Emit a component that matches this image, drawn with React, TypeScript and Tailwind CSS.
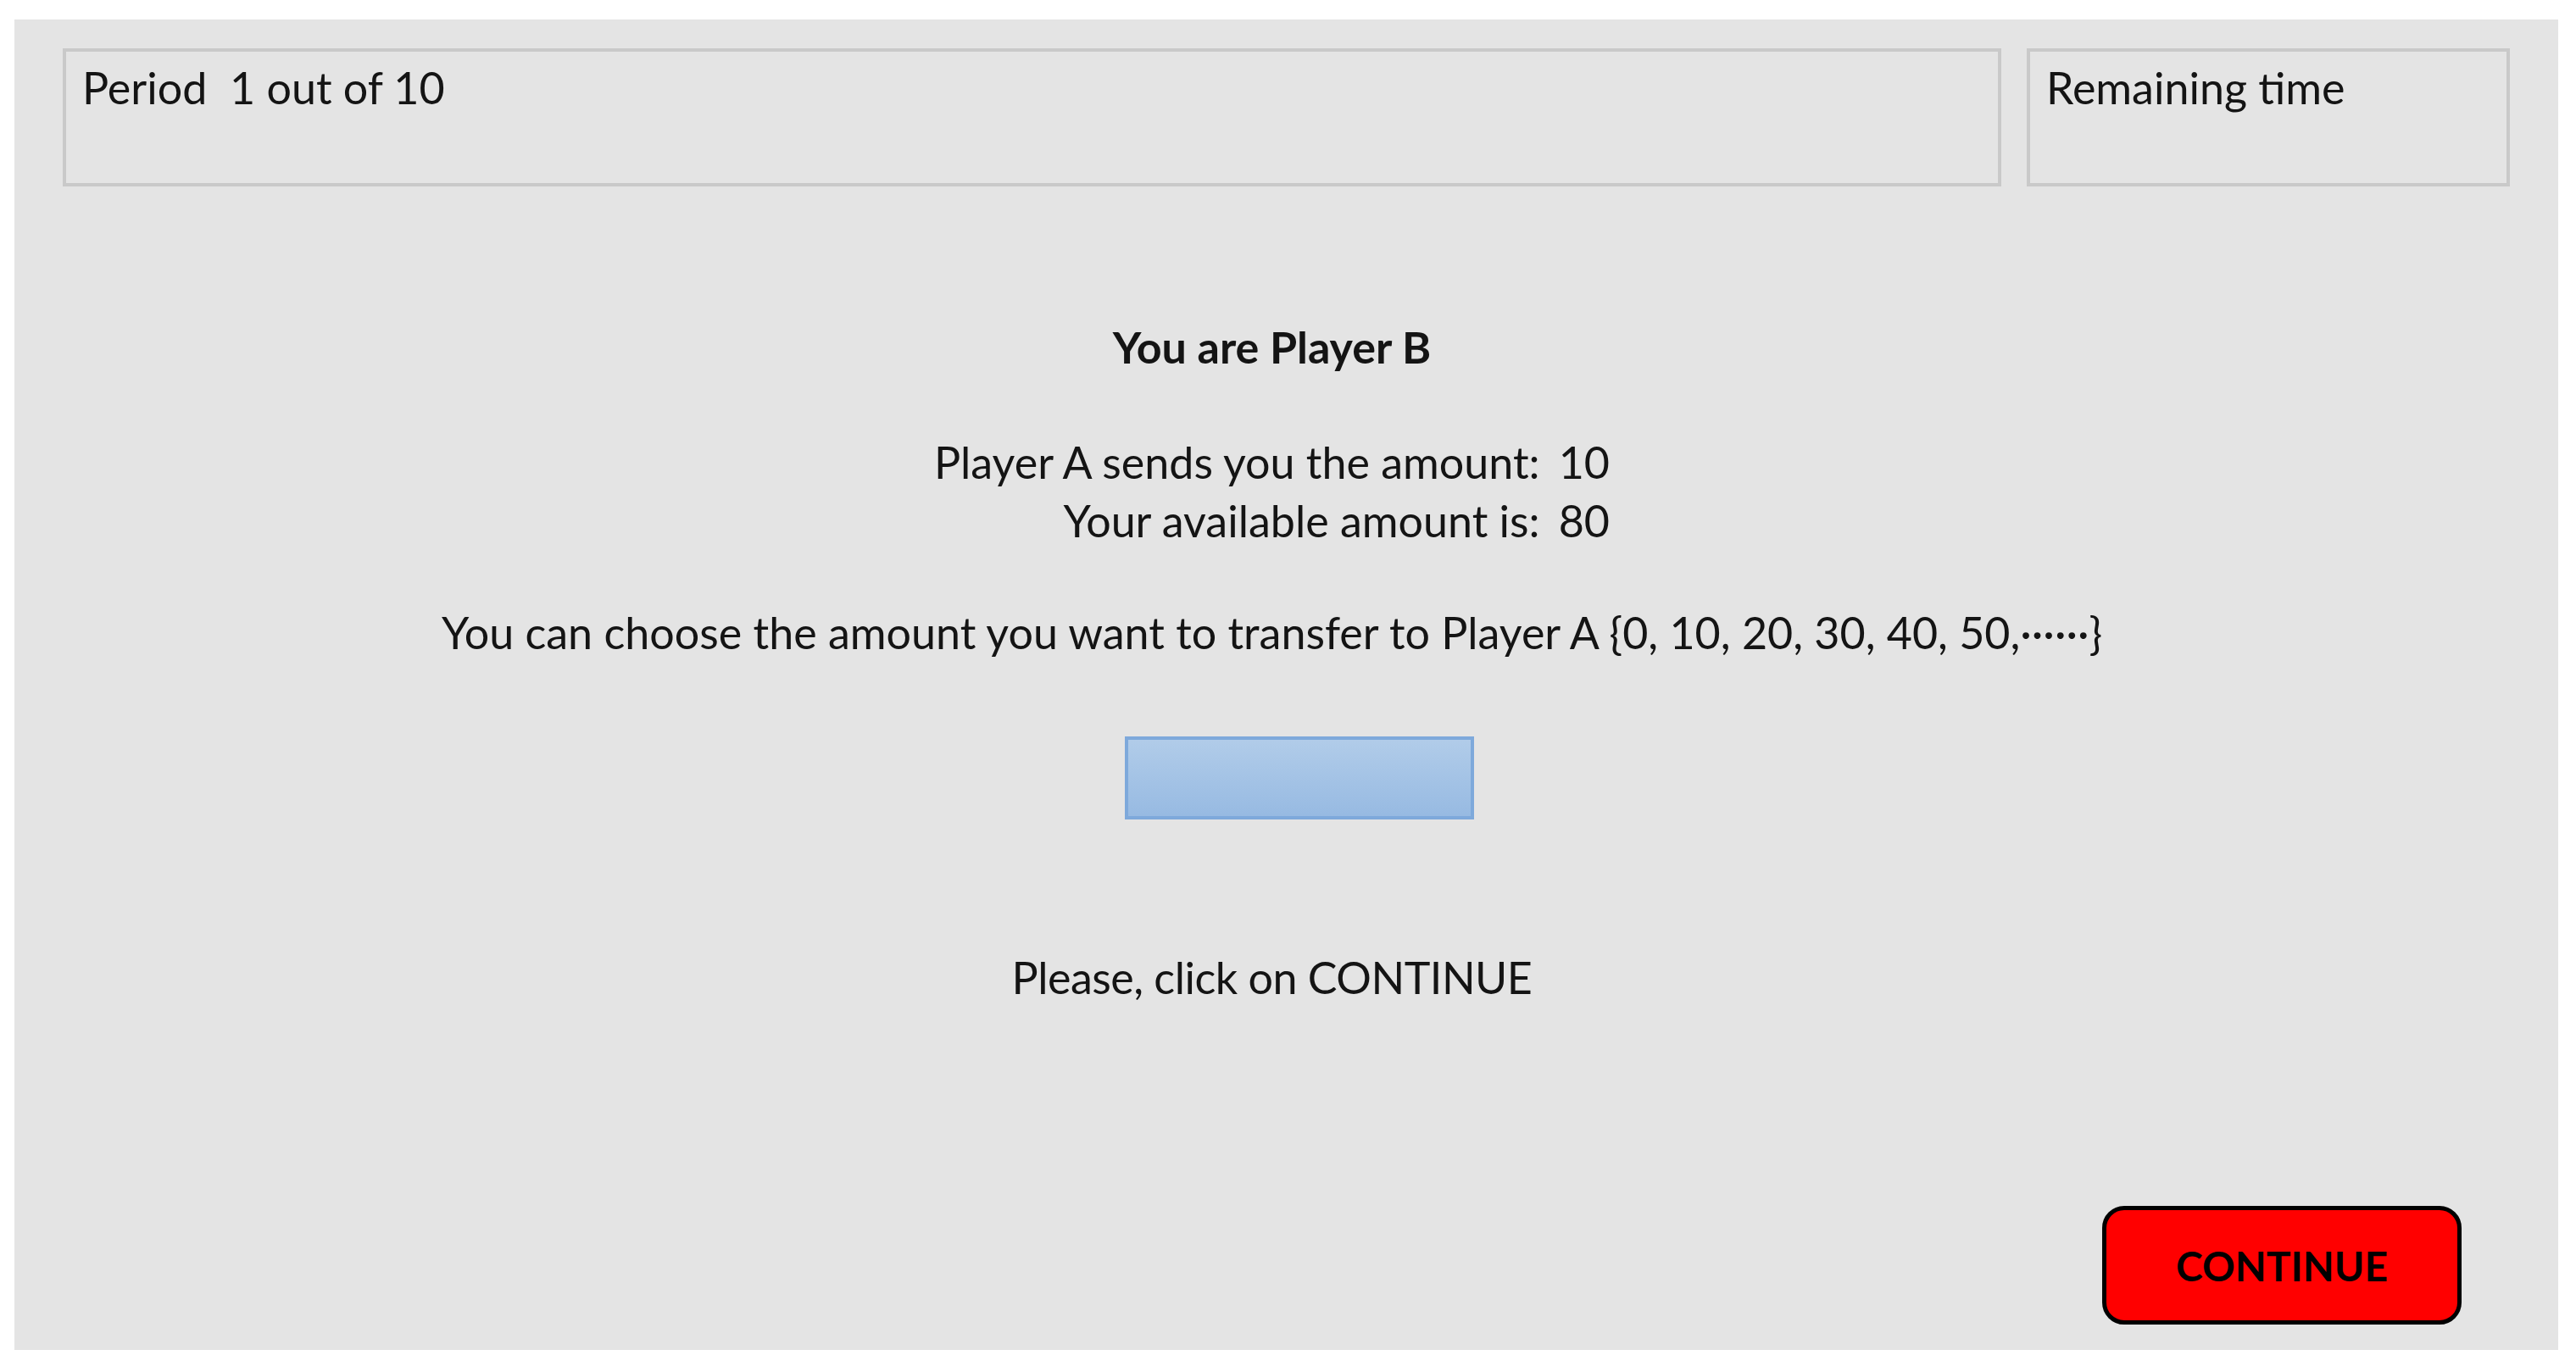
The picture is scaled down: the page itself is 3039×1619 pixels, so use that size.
const FONT = 'font-["Lato","Open_Sans",sans-serif]'

function InfoBox({ label, className }: { label: string; className: string }) {
    return (
        <div className={`h-full border-4 border-[#c9c9c9] px-[19px] pt-[8px] ${className}`}>
            <span className="text-[52px] leading-[69px] text-[#141414]">{label}</span>
        </div>
    )
}

export default function App() {
    return (
        <div className={`min-h-screen bg-white pt-[23px] pl-[17px] ${FONT}`}>
            <div className="flex h-[1570px] w-[3001px] flex-col bg-[#e4e4e4] px-[57px] pt-[34px] pb-[30px] text-[52px] leading-[69px] text-[#141414]">
                <div className="flex h-[163px] gap-[30px]">
                    <InfoBox label="Period  1 out of 10" className="flex-1 whitespace-pre" />
                    <InfoBox label="Remaining time" className="w-[570px]" />
                </div>

                <div className="mt-[155px] flex flex-col items-center pr-[34px]">
                    <p className="font-bold">You are Player B</p>

                    <div className="mt-[67px] grid grid-cols-[auto_auto] gap-x-[22px]">
                        <span className="text-right">Player A sends you the amount:</span>
                        <span>10</span>
                        <span className="text-right">Your available amount is:</span>
                        <span>80</span>
                    </div>

                    <p className="mt-[63px]">
                        You can choose the amount you want to transfer to Player A {'{'}0, 10, 20, 30, 40, 50,······{'}'}
                    </p>

                    <div className="mt-[88px] ml-[64px] h-[98px] w-[412px] border-4 border-[#7ea9db] bg-gradient-to-b from-[#b1cce9] to-[#97bae2]" />

                    <p className="mt-[152px] tracking-[-0.5px]">Please, click on CONTINUE</p>
                </div>

                <div className="mt-auto flex justify-end pr-[57px]">
                    <button
                        type="button"
                        className="flex h-[140px] w-[424px] items-center justify-center rounded-[26px] border-[5px] border-black bg-[#ff0000] text-[48px] font-bold text-black"
                    >
                        CONTINUE
                    </button>
                </div>
            </div>
        </div>
    )
}
